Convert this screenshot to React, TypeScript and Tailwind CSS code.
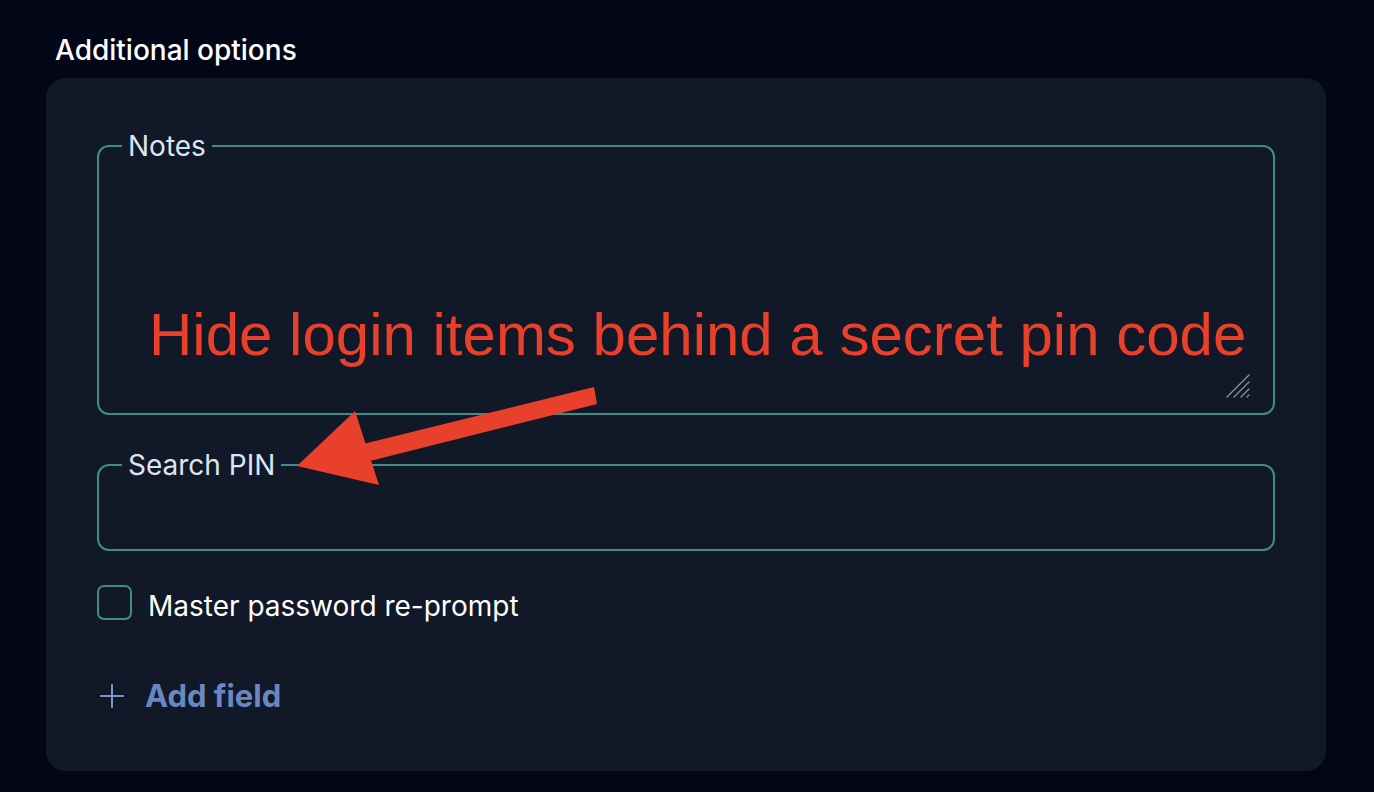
function ResizeGrip() {
  return (
    <svg width="26" height="26" viewBox="0 0 26 26" className="absolute bottom-[14px] right-[22px]">
      <g stroke="#8b8f98" strokeWidth="1.3" strokeLinecap="round">
        <line x1="2" y1="24" x2="24" y2="2" />
        <line x1="9" y1="24" x2="24" y2="9" />
        <line x1="16" y1="24" x2="24" y2="16" />
        <line x1="22" y1="24" x2="24" y2="22" />
      </g>
    </svg>
  )
}

function PlusIcon() {
  return (
    <svg width="24" height="24" viewBox="0 0 24 24" className="text-[#7c97cc]">
      <g stroke="currentColor" strokeWidth="2" strokeLinecap="round">
        <line x1="12" y1="1" x2="12" y2="23" />
        <line x1="1" y1="12" x2="23" y2="12" />
      </g>
    </svg>
  )
}

function Annotation() {
  return (
    <>
      <div
        className="absolute left-[149px] top-[298px] text-[60px] leading-[74px] text-[#e8402a] whitespace-nowrap"
        style={{ fontFamily: '"Liberation Sans", Arial, sans-serif' }}
      >
        Hide login items behind a secret pin code
      </div>
      <svg width="1374" height="792" className="absolute left-0 top-0 pointer-events-none">
        <polygon points="594,387 597,404 362,463 355,446" fill="#e8402a" />
        <polygon points="297,466 355,411 379,485" fill="#e8402a" />
      </svg>
    </>
  )
}

export default function App() {
  return (
    <div
      className="relative min-h-screen bg-[#020617] pl-[46px] pr-[48px] pt-[33px]"
      style={{ fontFamily: "Inter, 'Noto Sans', sans-serif" }}
    >
      <h2 className="ml-[9px] text-[28px] font-medium leading-[34px] text-white">Additional options</h2>

      <div className="mt-[11px] rounded-[20px] bg-[#111827] px-[51px] pt-[53px] pb-[56px]">
        <fieldset className="relative h-[284px] rounded-[12px] border-2 border-[#3f8e86] pl-[23px]">
          <legend className="px-[6px] text-[28px] leading-[30px] text-[#dde5f3]">Notes</legend>
          <ResizeGrip />
        </fieldset>

        <fieldset className="mt-[35px] h-[101px] rounded-[12px] border-2 border-[#3f8e86] pl-[23px]">
          <legend className="px-[6px] text-[28px] leading-[30px] text-[#dde5f3]">Search PIN</legend>
        </fieldset>

        <label className="mt-[34px] flex items-start gap-[16px]">
          <span className="h-[35px] w-[35px] shrink-0 rounded-[7px] border-2 border-[#3f8e86]" />
          <span className="mt-[4px] text-[28px] leading-[34px] text-white">Master password re-prompt</span>
        </label>

        <button className="mt-[54px] flex items-center gap-[21px] pl-[3px]">
          <PlusIcon />
          <span className="text-[31px] font-bold leading-[38px] text-[#6a87c0]">Add field</span>
        </button>
      </div>

      <Annotation />
    </div>
  )
}
